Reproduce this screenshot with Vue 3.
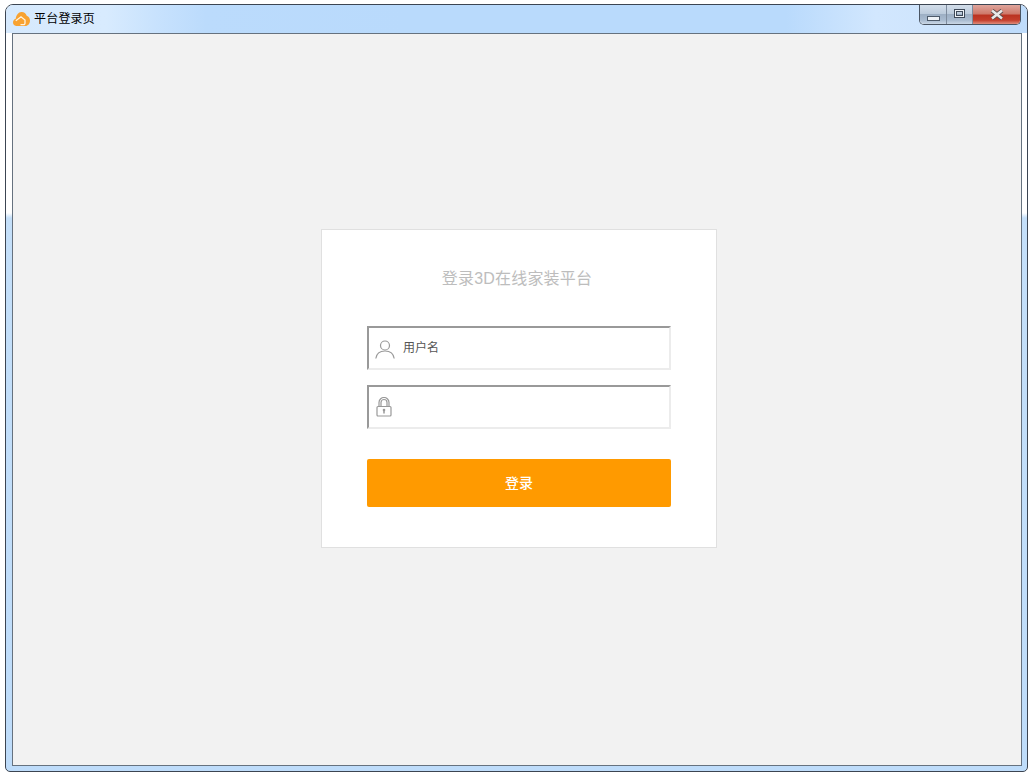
<script setup>
const title = '平台登录页'
</script>

<template>
  <div class="page">
    <div class="window">
      <header class="titlebar">
        <svg class="logo" width="17" height="14" viewBox="0 0 17 14">
          <path d="M3.200 14C1.200 13.800 0 12.300 0 10.500 0 8.800 1 7.300 2.700 6.800 3.300 3 5.500.3 8.300.1c2.700-.2 4.600 1.300 5.400 3.700C15.700 4.500 17 6.300 17 8.500c0 3-1.900 5.500-4.800 5.500z" fill="#f8a231"/>
          <path d="M2.800 8.800 8 4.800l4 3.200v3.200a1.500 1.500 0 0 1-1.500 1.500H7.500" fill="none" stroke="#fff3e0" stroke-width="1.300"/>
        </svg>
        <span class="title">{{ title }}</span>
        <div class="controls">
          <button class="ctl" aria-label="最小化"><i class="min"></i></button>
          <button class="ctl" aria-label="最大化"><i class="max"></i></button>
          <button class="ctl close" aria-label="关闭">
            <svg width="14" height="11" viewBox="0 0 14 11"><path d="M2 1.500 12 9.500M12 1.500 2 9.500" stroke="#5a4a4a" stroke-width="4.200" /><path d="M2 1.500 12 9.500M12 1.500 2 9.500" stroke="#e8e8e8" stroke-width="2.600" /></svg>
          </button>
        </div>
      </header>
      <main class="content">
        <section class="card">
          <h1>登录3D在线家装平台</h1>
          <label class="field">
            <svg width="20" height="22" viewBox="0 -2 20 22" fill="none" stroke="#9a9a9a" stroke-width="1.200">
              <circle cx="10" cy="6.500" r="4.500"/>
              <path d="M.8 19.500C1.500 14.500 5 12 10 12s8.500 2.500 9.200 7.500"/>
            </svg>
            <span class="value">用户名</span>
          </label>
          <label class="field">
            <svg width="16" height="20" viewBox="0 0 16 20" fill="none" stroke="#999" stroke-width="1.200">
              <path d="M3 9.500V5.500a5 5 0 0 1 10 0v4M5 9.500V5.500a3 3 0 0 1 6 0v4" />
              <rect x="1" y="9.500" width="14" height="9.500" rx="1"/>
              <path d="M8 13v3.500" stroke-width="1.500"/>
              <circle cx="8" cy="13" r="1.300" fill="#999" stroke="none"/>
            </svg>
          </label>
          <button class="submit">登录</button>
        </section>
      </main>
    </div>
  </div>
</template>

<style>
html, body { margin: 0; background: #fff; }
</style>

<style scoped>
.page {
  width: 1031px;
  height: 774px;
  padding: 4px 3px 2px 5px;
  box-sizing: border-box;
  font-family: "Liberation Sans", "Noto Sans CJK SC", sans-serif;
}
.window {
  height: 100%;
  box-sizing: border-box;
  border: 1px solid #3c4552;
  border-radius: 8px 8px 5px 5px;
  padding: 0 5px 5px 6px;
  display: flex;
  flex-direction: column;
  background:
    linear-gradient(to bottom, #fff 0, #fff 208px, #c4dff9 213px, #bedcfa 100%);
}
.titlebar {
  height: 28px;
  margin: 0 -5px 0 -6px;
  padding-left: 7px;
  display: flex;
  align-items: flex-start;
  border-radius: 7px 7px 0 0;
  background: linear-gradient(to right, #d6e9fd 0, #d8ebfe 100px, #c8e2fd 150px, #bbdbfc 200px, #b9dafc 400px, #b9dafc 780px, #d2e7fe 870px, #cfe5fd 920px, #bfdcfb 1000px);
}
.logo { margin-top: 7px; flex: none; }
.title {
  margin-left: 4px;
  margin-top: 6px;
  font-size: 12px;
  line-height: 16px;
  letter-spacing: .2px;
  color: #000;
}
.controls {
  margin-left: auto;
  margin-right: 6px;
  display: flex;
  height: 19px;
  border: 1px solid #4a5563;
  border-top: 0;
  border-radius: 0 0 5px 5px;
  overflow: hidden;
  background: #fff;
}
.ctl {
  width: 27px;
  padding: 0;
  border: 0;
  border-right: 1px solid #7e8c9e;
  display: flex;
  align-items: center;
  justify-content: center;
  background: linear-gradient(to bottom, #d3deea 0, #bccbdc 45%, #9dafc4 50%, #a9bbd0 80%, #cbd8e6 100%);
}
.ctl:nth-child(2) { width: 26px; }
.ctl.close {
  width: 47px;
  border-right: 0;
  background: linear-gradient(to bottom, #dfa59c 0, #cf7a6c 45%, #bb3322 55%, #c43e2c 80%, #e08d7c 100%);
}
.min {
  display: block;
  width: 11px;
  height: 3px;
  margin-top: 7px;
  background: #eef2f7;
  border: 1px solid #4d5a6a;
}
.max {
  display: block;
  width: 9px;
  height: 7px;
  border: 1px solid #3f4a59;
  box-shadow: inset 0 0 0 1px #eef2f7, inset 0 0 0 2px #3f4a59;
  margin-top: -2px;
}
.content {
  flex: 1;
  box-sizing: border-box;
  border: 1px solid #66727f;
  background: #f2f2f2;
  display: flex;
  justify-content: center;
  padding: 195px 0 0 4px;
}
.card {
  width: 396px;
  height: 319px;
  box-sizing: border-box;
  background: #fff;
  border: 1px solid #e0e0e0;
  padding: 0 45px;
  display: flex;
  flex-direction: column;
}
h1 {
  margin: 38px 0 36px;
  padding-right: 4px;
  font-size: 16px;
  line-height: 22px;
  font-weight: 400;
  letter-spacing: .2px;
  color: #bdbdbd;
  text-align: center;
}
.field {
  height: 44px;
  width: 304px;
  box-sizing: border-box;
  border-style: solid;
  border-width: 2px;
  border-color: #999 #ececec #ececec #999;
  margin-bottom: 15px;
  display: flex;
  align-items: center;
  padding-left: 6px;
}
.field svg { flex: none; }
.field:nth-of-type(2) svg { margin-left: 1px; }
.value {
  margin-left: 8px;
  margin-top: -4px;
  font-size: 12px;
  color: #555;
}
.submit {
  margin-top: 15px;
  height: 48px;
  width: 304px;
  border: 0;
  border-radius: 2px;
  padding: 0 0 3px;
  background: #ff9a00;
  color: #fff;
  font: inherit;
  font-size: 14px;
  font-weight: 500;
}
</style>
